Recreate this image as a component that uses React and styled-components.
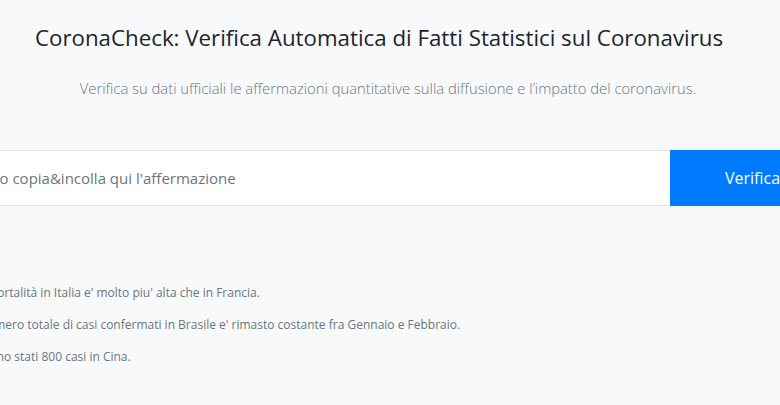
import React from "react";
import styled, { createGlobalStyle } from "styled-components";

const GlobalStyle = createGlobalStyle`
  html, body {
    margin: 0;
    padding: 0;
    background: #f8f9fa;
    overflow: hidden;
  }
  body {
    font-family: "Open Sans", "Noto Sans", sans-serif;
    color: #212529;
  }
`;

const Page = styled.div`
  width: 780px;
  height: 405px;
  display: flex;
  flex-direction: column;
  align-items: center;
  overflow: hidden;
`;

const Title = styled.h1`
  margin: 24px 0 0;
  padding-right: 22px;
  font-size: 22.3px;
  font-weight: 500;
  line-height: 28px;
  color: #212529;
  white-space: nowrap;
`;

const Lead = styled.p`
  margin: 26px 0 0;
  padding-right: 4px;
  font-size: 14.8px;
  font-weight: 300;
  line-height: 20px;
  color: #6c757d;
  white-space: nowrap;
`;

const Wide = styled.div`
  align-self: center;
  width: 890px;
  flex-shrink: 0;
  display: flex;
  flex-direction: column;
`;

const SearchForm = styled.form`
  margin-top: 52px;
  display: flex;
  height: 56px;
`;

const Input = styled.input`
  flex: 1;
  border: 1px solid #dee2e6;
  border-right: none;
  background: #fff;
  padding: 0 13px;
  font-family: inherit;
  font-size: 15px;
  color: #495057;
  outline: none;
  &::placeholder {
    color: #6c757d;
  }
`;

const Button = styled.button`
  width: 165px;
  border: none;
  background: #007bff;
  color: #fff;
  font-family: inherit;
  font-size: 16px;
  cursor: pointer;
`;

const Examples = styled.ul`
  list-style: none;
  margin: 78px 0 0;
  padding: 0 0 0 25px;
  display: flex;
  flex-direction: column;
  gap: 14px;
`;

const Example = styled.li`
  font-size: 12px;
  line-height: 18px;
  color: #6c757d;
  white-space: nowrap;
`;

const examples = [
  "La mortalità in Italia e' molto piu' alta che in Francia.",
  "Il numero totale di casi confermati in Brasile e' rimasto costante fra Gennaio e Febbraio.",
  "Ci sono stati 800 casi in Cina.",
];

export default function App() {
  return (
    <>
      <GlobalStyle />
      <Page>
        <Title>CoronaCheck: Verifica Automatica di Fatti Statistici sul Coronavirus</Title>
        <Lead>
          Verifica su dati ufficiali le affermazioni quantitative sulla diffusione e l’impatto del coronavirus.
        </Lead>
        <Wide>
          <SearchForm onSubmit={(e) => e.preventDefault()}>
            <Input placeholder="Scrivi o copia&incolla qui l'affermazione" />
            <Button type="submit">Verifica</Button>
          </SearchForm>
          <Examples>
            {examples.map((text) => (
              <Example key={text}>{text}</Example>
            ))}
          </Examples>
        </Wide>
      </Page>
    </>
  );
}
